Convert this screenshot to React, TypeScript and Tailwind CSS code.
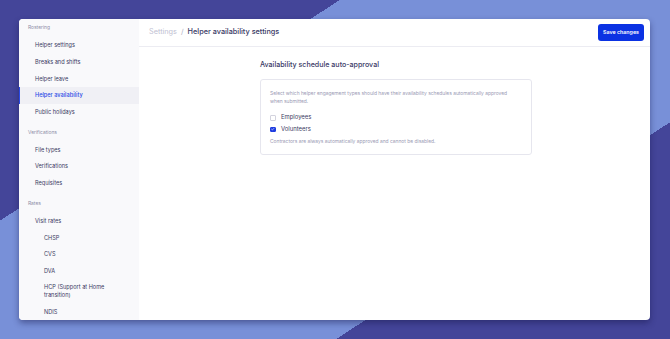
import { Check } from 'lucide-react'

const sections = [
  {
    title: 'Rostering',
    items: [
      { label: 'Helper settings' },
      { label: 'Breaks and shifts' },
      { label: 'Helper leave' },
      { label: 'Helper availability', active: true },
      { label: 'Public holidays' },
    ],
  },
  {
    title: 'Verifications',
    items: [{ label: 'File types' }, { label: 'Verifications' }, { label: 'Requisites' }],
  },
  {
    title: 'Rates',
    items: [
      { label: 'Visit rates' },
      { label: 'CHSP', sub: true },
      { label: 'CVS', sub: true },
      { label: 'DVA', sub: true },
      { label: 'HCP (Support at Home\ntransition)', sub: true },
      { label: 'NDIS', sub: true },
    ],
  },
]

function Sidebar() {
  return (
    <aside className="w-[120px] shrink-0 bg-[#f9f9fb] pt-[4px]">
      {sections.map((section, i) => (
        <div key={section.title} className={i === 0 ? '' : 'mt-[7px]'}>
          <div className="mb-[4px] flex h-[10px] items-center pl-[9px] text-[4.9px] text-[#8e8ea8]">
            {section.title}
          </div>
          {section.items.map((item) => {
            const lines = item.label.split('\n')
            return (
              <div
                key={item.label}
                className={`flex items-center border-l ${
                  item.active
                    ? 'border-[#2a4ae6] bg-[#f0f0f5] font-medium text-[#2a4ae6]'
                    : 'border-transparent text-[#3a3a62]'
                } ${item.sub ? 'pl-[24px]' : 'pl-[15px]'} ${
                  lines.length > 1 ? 'py-[4px]' : 'h-[16.7px]'
                } text-[5.6px] leading-[8px]`}
              >
                <span>
                  {lines.map((l, j) => (
                    <span key={j} className="block">
                      {l}
                    </span>
                  ))}
                </span>
              </div>
            )
          })}
        </div>
      ))}
    </aside>
  )
}

function CheckRow({ label, checked }: { label: string; checked?: boolean }) {
  return (
    <div className="flex h-[11.7px] items-center gap-[5.5px]">
      <span
        className={`flex h-[5.5px] w-[5.5px] items-center justify-center rounded-[1px] border ${
          checked ? 'border-[#1f3de0] bg-[#1f3de0]' : 'border-[#d3d3de] bg-white'
        }`}
      >
        {checked && <Check className="h-[4.5px] w-[4.5px] text-white" strokeWidth={4} />}
      </span>
      <span className="text-[5.9px] text-[#3a3a62]">{label}</span>
    </div>
  )
}

export default function App() {
  return (
    <div
      className="flex h-[339px] w-[670px] bg-[linear-gradient(147deg,#444599_28.5%,#7890d8_28.5%,#7890d8_72%,#444599_72%)] p-[19px] pr-[20px]"
      style={{ fontFamily: 'Inter, "Noto Sans", sans-serif' }}
    >
      <div className="flex h-[301px] w-[631px] overflow-hidden rounded-[4px] bg-white shadow-[0_3px_6px_rgba(20,20,70,0.45)]">
        <Sidebar />
        <main className="flex flex-1 flex-col">
          <header className="flex h-[28px] shrink-0 items-center justify-between border-b border-[#ececf2] pl-[10px] pr-[6px]">
            <div className="flex items-center gap-[4px] text-[7.3px]">
              <span className="text-[#c0c0d2]">Settings</span>
              <span className="text-[#b0b0c4]">/</span>
              <span className="font-medium text-[#3a3a66]">Helper availability settings</span>
            </div>
            <button className="flex h-[17px] w-[46px] items-center justify-center rounded-[3px] bg-[#0b32e3] text-[5.3px] font-semibold text-white">
              Save changes
            </button>
          </header>
          <div className="ml-[121px] w-[272px] pt-[13px]">
            <h2 className="h-[10px] text-[7.1px] leading-[10px] font-medium text-[#3a3a66]">
              Availability schedule auto-approval
            </h2>
            <div className="mt-[9px] rounded-[3px] border border-[#e6e6ee] px-[9px] pt-[9px] pb-[9px]">
              <p className="text-[4.9px] leading-[8px] text-[#9a9ab4]">
                Select which helper engagement types should have their availability schedules automatically approved
                <br />
                when submitted.
              </p>
              <div className="mt-[7px]">
                <CheckRow label="Employees" />
                <CheckRow label="Volunteers" checked />
              </div>
              <p className="mt-[2px] text-[4.9px] leading-[8px] text-[#9a9ab4]">
                Contractors are always automatically approved and cannot be disabled.
              </p>
            </div>
          </div>
        </main>
      </div>
    </div>
  )
}
